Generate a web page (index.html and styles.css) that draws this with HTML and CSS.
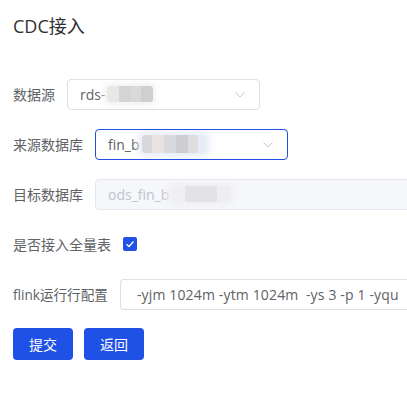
FILE: index.html
```html
<!DOCTYPE html>
<html lang="zh">
<head>
<meta charset="utf-8">
<title>CDC接入</title>
<link rel="stylesheet" href="styles.css">
</head>
<body>
<div class="page">
  <h1 class="title">CDC接入</h1>
  <form class="form">
    <div class="row">
      <label class="label">数据源</label>
      <div class="select">
        <span class="value">rds-</span><span class="blur b1"></span>
        <svg class="chev" width="10" height="6" viewBox="0 0 10 6"><path d="M0.5 0.5 L5 5 L9.5 0.5" fill="none" stroke="#c0c4cc" stroke-width="1"/></svg>
      </div>
    </div>
    <div class="row">
      <label class="label">来源数据库</label>
      <div class="select focus">
        <span class="value">fin_b</span><span class="blur b2"></span>
        <svg class="chev" width="10" height="6" viewBox="0 0 10 6"><path d="M0.5 0.5 L5 5 L9.5 0.5" fill="none" stroke="#c0c4cc" stroke-width="1"/></svg>
      </div>
    </div>
    <div class="row">
      <label class="label">目标数据库</label>
      <div class="input disabled">
        <span class="value">ods_fin_b</span><span class="blur b3"></span>
      </div>
    </div>
    <div class="row">
      <label class="label">是否接入全量表</label>
      <span class="checkbox">
        <svg width="14" height="14" viewBox="0 0 14 14"><path d="M3.5 7.2 L6 9.5 L10.5 4.5" fill="none" stroke="#fff" stroke-width="1.3"/></svg>
      </span>
    </div>
    <div class="row">
      <label class="label small">flink运行行配置</label>
      <div class="input wide">
        <span class="value cmd">-yjm 1024m -ytm 1024m&nbsp; -ys 3 -p 1 -yqu</span>
      </div>
    </div>
    <div class="actions">
      <button type="button" class="btn">提交</button>
      <button type="button" class="btn">返回</button>
    </div>
  </form>
</div>
</body>
</html>
```
FILE: styles.css
```css
html, body {
  margin: 0;
  padding: 0;
  overflow: hidden;
  background: #fff;
}
body {
  font-family: "Open Sans", "Noto Sans CJK SC", sans-serif;
  color: #606266;
  font-size: 14px;
}
.page {
  padding: 14px 0 0 13px;
  width: 600px;
}
.title {
  margin: 0;
  font-size: 18px;
  line-height: 24px;
  font-weight: 400;
  color: #303133;
}
.form {
  margin-top: 40px;
}
.row {
  display: flex;
  align-items: center;
  height: 32px;
  margin-bottom: 18px;
}
.label {
  margin-right: 12px;
  color: #606266;
  font-size: 14px;
  white-space: nowrap;
}
.label.small {
  font-size: 13.6px;
}
.select, .input {
  box-sizing: border-box;
  height: 31px;
  border: 1px solid #dcdfe6;
  border-radius: 4px;
  display: flex;
  align-items: center;
  padding: 0 12px;
  position: relative;
  white-space: nowrap;
  overflow: hidden;
}
.select {
  width: 193px;
}
.select.focus {
  border-color: #1f51e6;
}
.input.disabled {
  width: 420px;
  background: #f5f7fa;
  border-color: #e4e7ed;
  color: #c0c4cc;
}
.input.wide {
  width: 300px;
  padding-left: 16px;
  border-right: none;
  border-radius: 4px 0 0 4px;
}
.value {
  font-size: 14px;
}
.cmd {
  letter-spacing: 0.15px;
}
.chev {
  position: absolute;
  right: 14px;
  top: 12px;
}
.blur {
  display: inline-block;
  height: 16px;
  margin-left: 2px;
  border-radius: 3px;
  filter: blur(0.6px);
}
.b1 {
  width: 46px;
  background: linear-gradient(90deg, #e8e8e8 0 12px, #d4d4d4 12px 24px, #d9d9d9 24px 34px, #cfcfcf 34px 46px);
  box-shadow: 0 0 6px 3px #f2f2f2;
}
.b2 {
  width: 64px;
  height: 18px;
  background: linear-gradient(90deg, #d8d8dc 0 10px, #e8e3e0 10px 22px, #d9d9de 22px 34px, #cdcdd2 34px 46px, #dedede 46px 56px, #e8ecf8 56px 64px);
  box-shadow: 0 0 6px 4px #e9eef9;
}
.b3 {
  width: 60px;
  background: linear-gradient(90deg, #f0f0f2 0 14px, #e3e3e6 14px 46px, #eeeef0 46px 60px);
  box-shadow: 0 0 6px 4px #f0f1f3;
}
.checkbox {
  width: 14px;
  height: 14px;
  box-sizing: border-box;
  background: #1f51e6;
  border-radius: 2px;
  display: inline-flex;
}
.actions {
  display: flex;
  gap: 11px;
}
.btn {
  width: 60px;
  height: 32px;
  border: none;
  border-radius: 4px;
  background: #1f51e6;
  color: #fff;
  font-family: "Noto Sans CJK SC", sans-serif;
  font-size: 14px;
  padding: 0;
  cursor: pointer;
}
```
